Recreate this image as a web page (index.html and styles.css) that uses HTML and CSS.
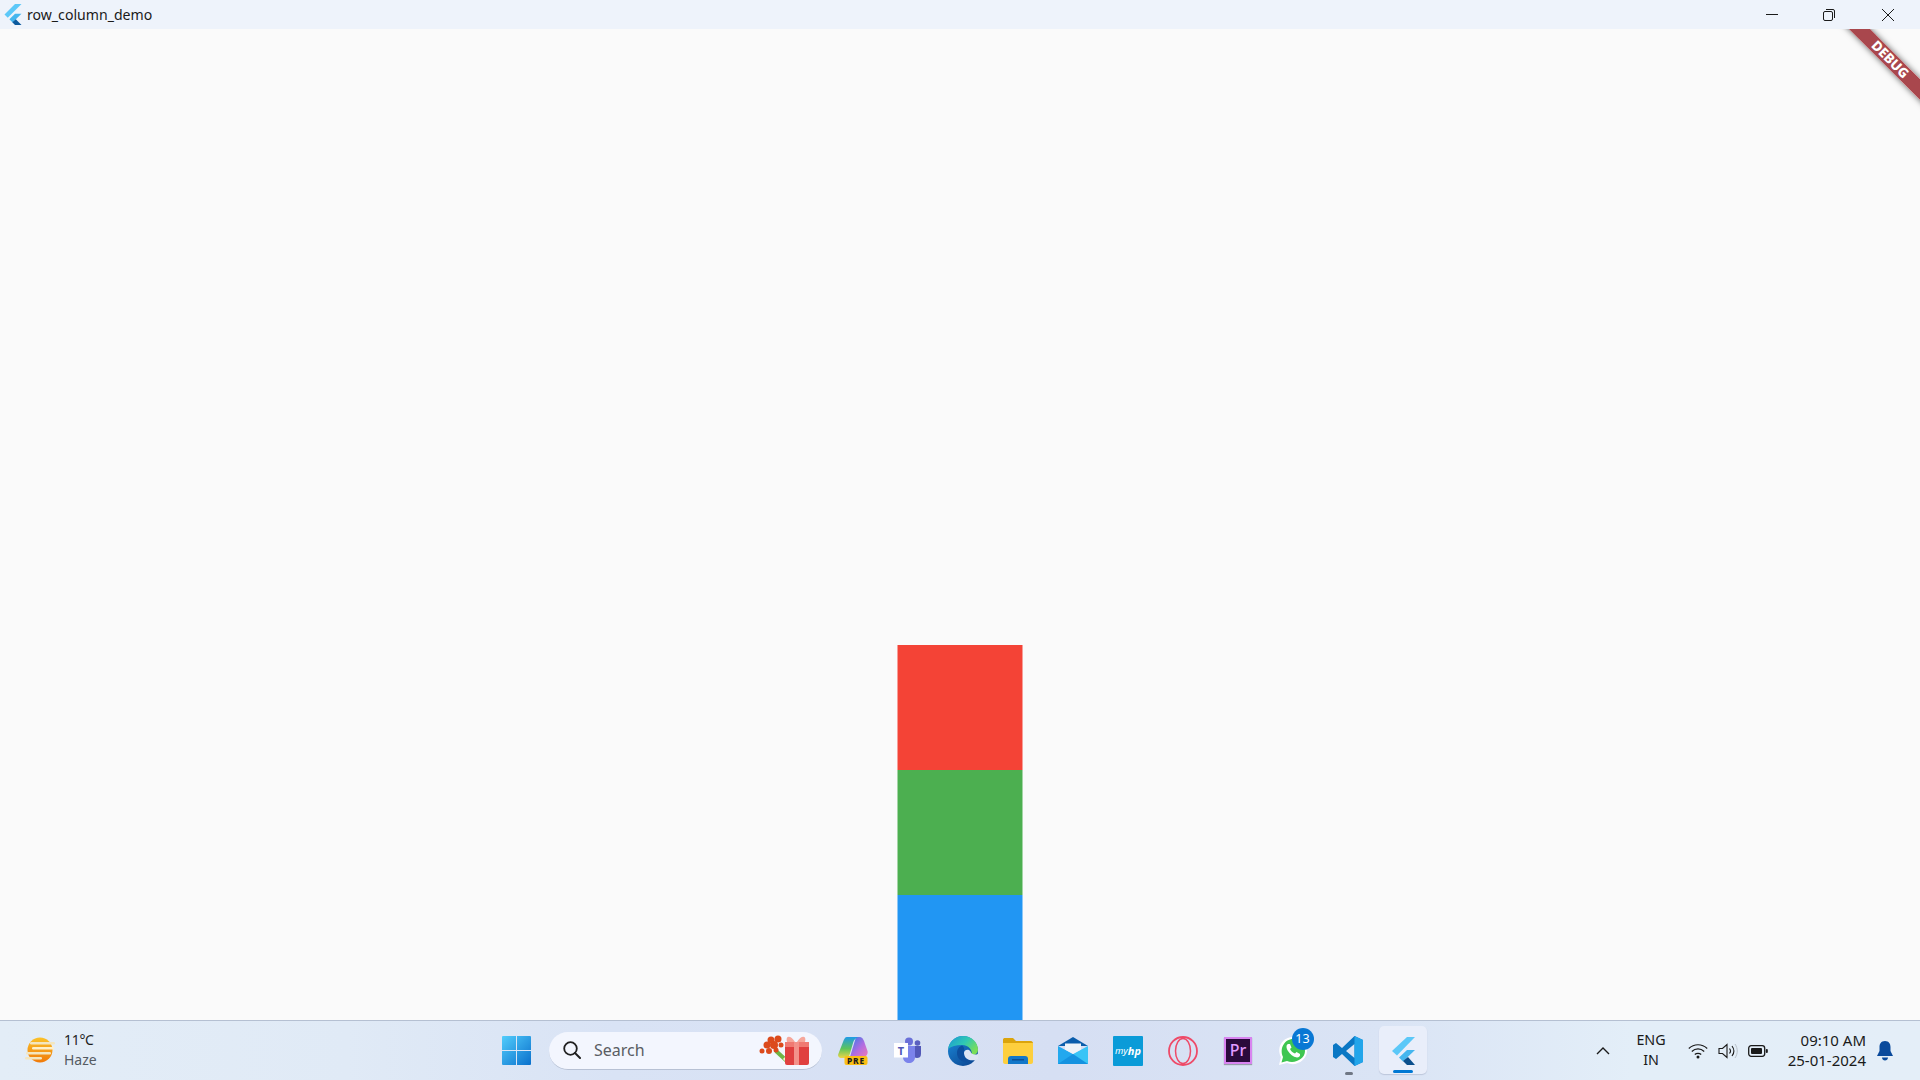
FILE: index.html
```html
<!DOCTYPE html>
<html lang="en">
<head>
<meta charset="utf-8">
<title>row_column_demo</title>
<link rel="stylesheet" href="styles.css">
</head>
<body>
<div class="window">
  <header class="titlebar">
    <div class="title-left">
      <svg class="title-logo" viewBox="2 0 20 24"><polygon points="14.3,0 2.3,12 6,15.7 21.7,0" fill="#5cc8f8"/><polygon points="14.3,11 7.9,17.5 11.5,21 21.7,11" fill="#45b6ee"/><polygon points="11.2,20.8 14.3,24 21.7,24 15.2,17.5" fill="#0b5a9e"/></svg>
      <span class="title-text">row_column_demo</span>
    </div>
    <div class="win-controls">
      <span class="win-btn"><svg width="12" height="12" viewBox="0 0 12 12"><path d="M0 5.5H12" stroke="#1a1a1a" fill="none"/></svg></span>
      <span class="win-btn"><svg class="restore-ico" width="12" height="12" viewBox="1 0 12 12"><rect x=".5" y="2.5" width="9" height="9" rx="1.5" fill="none" stroke="#1a1a1a"/><path d="M3 .5H10A1.5 1.5 0 0 1 11.5 2V9" fill="none" stroke="#1a1a1a"/></svg></span>
      <span class="win-btn"><svg width="12" height="12" viewBox="0 0 12 12"><path d="M0 0L12 12M12 0L0 12" stroke="#1a1a1a" fill="none"/></svg></span>
    </div>
  </header>
  <main class="content">
    <div class="box box-red"></div>
    <div class="box box-green"></div>
    <div class="box box-blue"></div>
    <div class="debug-banner">DEBUG</div>
  </main>
  <footer class="taskbar">
    <div class="weather">
      <svg class="ico-weather" viewBox="0 0 30 26"><defs><linearGradient id="sun" x1="0" y1="0" x2="0" y2="1"><stop offset="0" stop-color="#fbc22a"/><stop offset="1" stop-color="#f07a0a"/></linearGradient></defs><circle cx="15" cy="13" r="12.5" fill="url(#sun)"/><g fill="#f3e6bf"><rect x="5" y="5" width="25" height="2.6" rx="1.3"/><rect x="7" y="10" width="22" height="2.6" rx="1.3" fill="#fff0c8"/><rect x="1" y="15" width="25" height="2.6" rx="1.3"/><rect x="0" y="20" width="17" height="2.6" rx="1.3"/></g></svg>
      <div class="weather-text"><span class="temp">11°C</span><span class="cond">Haze</span></div>
    </div>
    <div class="center">
      <span class="tb-item">
        <svg class="ico-win" viewBox="0 0 29 29"><defs><linearGradient id="w1" x1="0" y1="0" x2="1" y2="1"><stop offset="0" stop-color="#52cdfc"/><stop offset="1" stop-color="#0a70cc"/></linearGradient></defs><path d="M1 0H14V14H0V1A1 1 0 0 1 1 0ZM15 0H28A1 1 0 0 1 29 1V14H15ZM0 15H14V29H1A1 1 0 0 1 0 28ZM15 15H29V28A1 1 0 0 1 28 29H15Z" fill="url(#w1)"/></svg>
      </span>
      <div class="search">
        <svg class="ico-search" viewBox="0 0 18 18"><circle cx="7.5" cy="7.5" r="6.3" fill="none" stroke="#202020" stroke-width="1.8"/><path d="M12 12L17 17" stroke="#202020" stroke-width="2" stroke-linecap="round"/></svg>
        <span class="search-text">Search</span>
        <svg class="ico-gift" viewBox="0 0 50 30"><path d="M17 16L29 27" stroke="#6fb545" stroke-width="4"/><path d="M25 23L30 28" stroke="#f3efc8" stroke-width="3"/><g fill="#dc4a1c"><circle cx="12" cy="5" r="3.5"/><circle cx="19" cy="4" r="3.5"/><circle cx="8" cy="10" r="3.5"/><circle cx="15" cy="10" r="4"/><circle cx="22" cy="10" r="2.5"/><circle cx="3" cy="16" r="2.5"/><circle cx="10" cy="16" r="3"/><circle cx="17" cy="15" r="2.5"/></g><path d="M36 7C32 0 26 0 28 7ZM38 7C42 0 48 0 46 7Z" fill="#f6a79b"/><rect x="26" y="7" width="24" height="23" rx="2" fill="#e0403f"/><rect x="26" y="7" width="24" height="5" fill="#f07a72"/><rect x="35" y="7" width="5" height="23" fill="#f3928a"/></svg>
      </div>
      <span class="tb-item">
        <svg class="ico" viewBox="0 0 30 30"><defs><linearGradient id="c1" x1="0" y1="0" x2="0" y2="1"><stop offset="0" stop-color="#1f9ae8"/><stop offset=".55" stop-color="#5cc45c"/><stop offset="1" stop-color="#ecd648"/></linearGradient><linearGradient id="c2" x1="0" y1="0" x2="1" y2="1"><stop offset="0" stop-color="#2b7fe6"/><stop offset=".55" stop-color="#b06ce2"/><stop offset="1" stop-color="#f07ab4"/></linearGradient></defs><path d="M18 1H21.500C24 1 25 3 26 5L29.500 15C30.300 18 28 21 25 21H12Z" fill="url(#c2)"/><path d="M9 1H20C17.500 2 16 4 15.300 6L11.800 18C11.200 20.500 9 22 7 22H3.500C1 22 -.5 20 .3 18L5 6C6 3 7 1 9 1Z" fill="url(#c1)"/><rect x="6.500" y="20" width="23" height="9" rx="2" fill="#fbbf14"/><text x="18" y="27.600" class="pre-text">PRE</text></svg>
      </span>
      <span class="tb-item">
        <svg class="ico" viewBox="0 0 30 30"><circle cx="16" cy="5.5" r="4" fill="#6a70d8"/><circle cx="24.5" cy="7" r="2.8" fill="#5a60c0"/><path d="M20.5 10H28V18C28 21 26 22 24 22C22 22 20.5 21 20.5 18Z" fill="#5258b8"/><path d="M10 10H22V21C22 25 19 27 16 27C13 27 10 25 10 21Z" fill="#7b83eb"/><rect x="1" y="7" width="14" height="14.5" fill="#fff"/><text x="8" y="18.6" class="teams-t">T</text></svg>
      </span>
      <span class="tb-item">
        <svg class="ico" viewBox="0 0 30 30"><defs><linearGradient id="e1" x1="0" y1="0" x2="1" y2=".6"><stop offset="0" stop-color="#1a96d6"/><stop offset=".55" stop-color="#2fc8b4"/><stop offset="1" stop-color="#7ade58"/></linearGradient><linearGradient id="e2" x1="0" y1="0" x2=".7" y2="1"><stop offset="0" stop-color="#1c8cdc"/><stop offset="1" stop-color="#0c4a96"/></linearGradient></defs><circle cx="15" cy="15" r="15" fill="url(#e2)"/><path d="M.2 13C1 5.500 7.500 0 15 0C24 0 30 6.500 30 13.500C30 17.500 27 19.500 23.500 19C25 15 21 9 14 9C8 9 3 10.500 .2 13Z" fill="url(#e1)"/><path d="M14 9.500C10 11 8 15 9.500 20C11 25 17 27 22 26L30 21V18.500C27.500 20 24 20 23.500 19L16 18C16 15 17 11 14 9.500Z" fill="#0d4f9e"/><path d="M16 17.500C15.500 13.500 21 12.500 22.500 15.500C23 17.500 25 19.500 30 18V23C26 25 17 25.500 16 17.500Z" fill="#dde5f4"/></svg>
      </span>
      <span class="tb-item">
        <svg class="ico" viewBox="0 0 30 30"><path d="M0 3.500C0 2.500 1 2 2 2H10L13 5H28C29 5 30 6 30 7V10H0Z" fill="#dba40c"/><path d="M0 7H30V26C30 27 29 28 28 28H2C1 28 0 27 0 26Z" fill="#fdcf3e"/><path d="M5 28V23C5 21 6 20 8 20H22C24 20 25 21 25 23V28Z" fill="#1277c9"/><rect x="9" y="23" width="12" height="1.500" fill="#0b4f94"/></svg>
      </span>
      <span class="tb-item">
        <svg class="ico" viewBox="0 0 30 30"><path d="M15 1L30 10H0Z" fill="#0a5dab"/><path d="M30 10V28H15V18Z" fill="#38c4f6"/><path d="M0 10L15 18V28H0Z" fill="#22a8ee"/><path d="M15 18L30 28H0Z" fill="#1492e0"/><path d="M7 7.500H23V13.500L15 18L7 13.500Z" fill="#eef3f8"/></svg>
      </span>
      <span class="tb-item">
        <span class="hp-tile">my<b>hp</b></span>
      </span>
      <span class="tb-item">
        <svg class="ico" viewBox="0 0 30 30"><circle cx="15" cy="15" r="14" fill="none" stroke="#ee4a68" stroke-width="1.800"/><ellipse cx="15" cy="15" rx="7.500" ry="12.500" fill="none" stroke="#ee4a68" stroke-width="1.500"/></svg>
      </span>
      <span class="tb-item">
        <span class="pr-tile">Pr</span>
      </span>
      <span class="tb-item">
        <svg class="ico" viewBox="0 0 30 30"><path d="M1 29L3 21C-2 11 5 1 15 1C23 1 29 7 29 15C29 24 18 31 9 27Z" fill="#fff"/><path d="M3.500 26.500L5 21C1 12 7 3 15 3C22 3 27 8.500 27 15C27 23 17 28 9 25Z" fill="#3fc651"/><path d="M10 8C8 9 8 12 10 15C12 18 15 21 19 21.500C21 21.500 22.500 20 22 18L18.500 16L17 17.500C15 17 12.500 14.500 12 13L13.500 11.500L12 8Z" fill="#fff"/></svg>
        <span class="badge">13</span>
      </span>
      <span class="tb-item">
        <svg class="ico" viewBox="0 0 30 30"><path d="M21.500 0L30 4V26L21.500 30L9 18L3 23L0 21V9L3 7L9 12ZM21.500 8L13 15L21.500 22Z" fill="#0a77c4"/><path d="M21.500 0L30 4V26L21.500 30Z" fill="#22a5ea"/></svg>
        <span class="dot-running"></span>
      </span>
      <span class="tb-item tb-active">
        <svg class="ico" viewBox="0 0 24 30"><polygon points="16,1 1,15 6,19.500 24,1" fill="#5cc8f8"/><polygon points="16,14 8,21.500 12,25.500 24,14" fill="#45b6ee"/><polygon points="12,25 16,29 24,29 17,21" fill="#0b4f8c"/></svg>
        <span class="dot-active"></span>
      </span>
    </div>
    <div class="tray">
      <span class="tray-btn tray-chev"><svg width="14" height="8" viewBox="0 0 14 8"><path d="M1 7L7 1L13 7" fill="none" stroke="#1a1a1a" stroke-width="1.400"/></svg></span>
      <div class="lang"><span>ENG</span><span>IN</span></div>
      <span class="tray-btn"><svg width="20" height="16" viewBox="0 0 20 16"><g fill="none" stroke="#1a1a1a" stroke-width="1.200"><path d="M.8 5.500C6 .5 14 .5 19.200 5.500"/><path d="M3.800 8.500C7.500 5 12.500 5 16.200 8.500"/><path d="M6.800 11.500C8.500 10 11.500 10 13.200 11.500"/></g><circle cx="10" cy="14" r="1.500" fill="#1a1a1a"/></svg></span>
      <span class="tray-btn"><svg width="20" height="18" viewBox="0 0 20 18"><path d="M1 6.500H4.500L9 2.500V15.500L4.500 11.500H1Z" fill="none" stroke="#1a1a1a" stroke-width="1.100"/><path d="M11.500 6.500C12.800 8 12.800 10 11.500 11.500M14 4C16.300 7 16.300 11 14 14" fill="none" stroke="#1a1a1a" stroke-width="1.100"/><path d="M17 2C20 6.500 20 11.500 17 16" fill="none" stroke="#b8c0c8" stroke-width="1"/></svg></span>
      <span class="tray-btn"><svg width="20" height="12" viewBox="0 0 20 12"><rect x=".7" y=".7" width="16" height="10.600" rx="2.500" fill="none" stroke="#1a1a1a" stroke-width="1.300"/><rect x="3" y="3" width="11" height="6" rx="1" fill="#1a1a1a"/><rect x="17.800" y="4" width="2" height="4" rx="1" fill="#1a1a1a"/></svg></span>
      <div class="clock"><span>09:10 AM</span><span>25-01-2024</span></div>
      <svg class="ico-bell" viewBox="0 0 16 20"><path d="M8 0C4 0 2.500 3 2.500 6V10L0 15H16L13.500 10V6C13.500 3 12 0 8 0Z" fill="#0a4a9c"/><path d="M5 16.500H11C11 18.500 9.500 19.500 8 19.500C6.500 19.500 5 18.500 5 16.500Z" fill="#0a4a9c"/></svg>
    </div>
  </footer>
</div>
</body>
</html>
```

FILE: styles.css
```css
* { box-sizing: border-box; }
html, body { margin: 0; padding: 0; height: 100%; }
body { font-family: "Noto Sans", "Open Sans", sans-serif; color: #1a1a1a; }
.window { width: 1920px; height: 1080px; display: flex; flex-direction: column; overflow: hidden; background: #fafafa; }

.titlebar { height: 29px; flex: none; background: #eef3fb; display: flex; align-items: center; justify-content: space-between; }
.title-left { display: flex; align-items: center; padding-left: 4px; }
.title-logo { width: 18px; height: 21px; display: block; }
.title-text { font-size: 14.1px; margin-left: 5px; color: #1a1a1a; line-height: 29px; }
.win-controls { display: flex; padding-right: 3px; }
.win-btn { width: 58px; height: 29px; display: flex; align-items: center; justify-content: center; }
.restore-ico { overflow: visible; }

.content { flex: 1; position: relative; overflow: hidden; display: flex; flex-direction: column; align-items: center; justify-content: flex-end; background: #fafafa; }
.box { width: 125px; height: 125px; flex: none; transform: translateX(-.5px); }
.box-red { background: #f44336; }
.box-green { background: #4caf50; }
.box-blue { background: #2196f3; }
.debug-banner { position: absolute; top: 22.5px; right: -30px; width: 120px; height: 15px; transform: rotate(45deg); background: rgba(149, 26, 34, .8); box-shadow: 0 0 6px rgba(0, 0, 0, .6); color: #fff; font: 800 13.5px/15px "Noto Sans", sans-serif; text-align: center; }

.taskbar { height: 60px; flex: none; border-top: 1px solid #b5c0d2; display: grid; grid-template-columns: 489px auto 1fr; background: linear-gradient(90deg, #e3edf7 0%, #e0eaf6 18%, #d9e3f5 32%, #d6dff3 55%, #dae4f5 72%, #e3eef8 85%, #e4eef8 100%); }
.weather { display: flex; align-items: center; padding-left: 25px; padding-bottom: 1px; }
.ico-weather { width: 30px; height: 26px; display: block; }
.weather-text { display: flex; flex-direction: column; margin-left: 9px; font-size: 14px; line-height: 20px; padding-bottom: 1px; }
.temp { color: #1f1f1f; letter-spacing: -.3px; }
.cond { color: #555b63; }

.center { display: flex; align-items: center; }
.tb-item { position: relative; width: 55px; height: 59px; display: flex; align-items: center; justify-content: center; flex: none; }
.ico { width: 30px; height: 30px; display: block; overflow: visible; }
.ico-win { width: 29px; height: 29px; display: block; }

.search { width: 273px; height: 38px; margin: 0 3.5px 0 5px; border-radius: 19px; background: #f3f6fe; border-bottom: 1px solid #b7c1d4; display: flex; align-items: center; padding: 0 13px 0 14px; }
.ico-search { width: 18px; height: 18px; display: block; }
.search-text { font-size: 16px; color: #5a5d63; margin-left: 13px; flex: 1; }
.ico-gift { width: 50px; height: 30px; display: block; }

.pre-text { font: 800 8.4px "Noto Sans", sans-serif; fill: #1c1c1c; text-anchor: middle; letter-spacing: .8px; }
.teams-t { font: 700 11px "Noto Sans", sans-serif; fill: #5058b8; text-anchor: middle; }

.hp-tile { width: 30px; height: 30px; border-radius: 1px; background: #0a9bd8; color: #fff; display: flex; align-items: center; justify-content: center; font: italic 400 9.5px "Noto Sans", sans-serif; }
.hp-tile b { font-size: 11px; font-weight: 700; }
.pr-tile { width: 28px; height: 27px; background: #2a0a3c; border: 2px solid #d884f0; color: #e29cff; font: 500 16px/23px "Noto Sans", sans-serif; text-align: center; box-shadow: 0 1px 1px rgba(0, 0, 0, .3); }
.badge { position: absolute; top: 7px; left: 26px; width: 22px; height: 22px; border-radius: 50%; background: #0a78d4; color: #fff; font-size: 12.5px; line-height: 22px; text-align: center; }
.dot-running { position: absolute; top: 51px; left: 24px; width: 8px; height: 3px; border-radius: 2px; background: #707784; }
.tb-active::before { content: ""; position: absolute; left: 3.5px; top: 5px; width: 48px; height: 48px; border-radius: 5px; background: #e9eefa; box-shadow: 0 1px 1px rgba(120, 130, 160, .3); }
.tb-active .ico { position: relative; }
.dot-active { position: absolute; top: 49px; left: 17.5px; width: 20px; height: 3px; border-radius: 2px; background: #0078d4; }

.tray { display: flex; align-items: center; justify-content: flex-end; padding-right: 27px; }
.tray-btn { width: 30px; height: 30px; display: flex; align-items: center; justify-content: center; flex: none; }
.tray-chev { width: 40px; }
.lang { width: 56px; margin-right: 4px; display: flex; flex-direction: column; align-items: center; font-size: 14.3px; line-height: 20px; padding-bottom: 2px; }
.clock { width: 93px; display: flex; flex-direction: column; align-items: flex-end; font-size: 15px; line-height: 20px; padding-bottom: 2px; }
.ico-bell { width: 16px; height: 20px; margin-left: 11px; display: block; flex: none; }
```
